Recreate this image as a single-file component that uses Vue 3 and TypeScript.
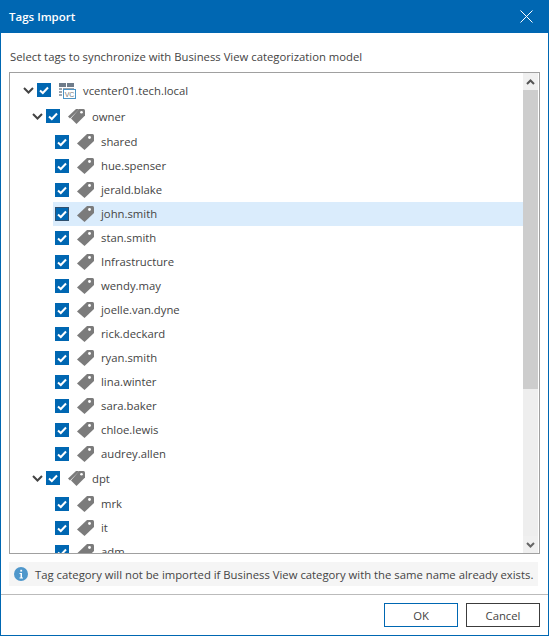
<script setup lang="ts">
interface Row { label: string; selected?: boolean }
const owners = ['shared','hue.spenser','jerald.blake','john.smith','stan.smith','Infrastructure','wendy.may','joelle.van.dyne','rick.deckard','ryan.smith','lina.winter','sara.baker','chloe.lewis','audrey.allen']
const rows: Row[] = owners.map(label => ({ label, selected: label === 'john.smith' }))
const dpt: Row[] = ['mrk','it','adm'].map(label => ({ label }))
const checkPath = 'M3 7.500l2.800 2.500L11 4.500'
const chevPath = 'M1 1l4.500 4.500L10 1'
const leafTag = 'M10 0H15.500Q17 0 17 1.500V7L7.500 16L0 9.500Z'
const catFront = 'M11 1H15.500Q17 1 17 2.500V7.500L8.500 16L3 10.500Z'
const catBack = 'M8 1L0 8.500L2 10.500L9.500 3L11 1Z'
</script>

<template>
  <div class="win">
    <header class="title">
      <span>Tags Import</span>
      <svg class="close" width="13" height="13" viewBox="0 0 13 13"><path d="M.5.5l12 12M12.500.5l-12 12" stroke="#fff" fill="none"/></svg>
    </header>
    <main class="body">
      <p class="lead">Select tags to synchronize with Business View categorization model</p>
      <div class="box">
        <div class="tree">
          <div class="row root">
            <svg class="chev" width="11" height="7" viewBox="0 0 11 7"><path :d="chevPath" fill="none" stroke="#444" stroke-width="2"/></svg>
            <span class="check"><svg width="14" height="14" viewBox="0 0 14 14"><path :d="checkPath" fill="none" stroke="#fff" stroke-width="2"/></svg></span>
            <svg class="vc" width="17" height="16" viewBox="0 0 17 16">
              <rect x="0" y="0" width="7" height="4" fill="#6f7c8a"/><rect x="8" y="0" width="7" height="4" fill="#6f7c8a"/>
              <rect x="0" y="5" width="3" height="2" fill="#9aa3ad"/><rect x="0" y="8" width="3" height="2" fill="#9aa3ad"/><rect x="0" y="11" width="3" height="2" fill="#9aa3ad"/>
              <rect x="4" y="5" width="11" height="2" fill="#9aa3ad"/>
              <rect x="4.500" y="6.500" width="12" height="9" fill="#fff" stroke="#4b93c4"/>
              <text x="10.500" y="13.500" text-anchor="middle" class="vc-text">VC</text>
            </svg>
            <span class="label top">vcenter01.tech.local</span>
          </div>
          <div class="row cat">
            <svg class="chev" width="11" height="7" viewBox="0 0 11 7"><path :d="chevPath" fill="none" stroke="#444" stroke-width="2"/></svg>
            <span class="check"><svg width="14" height="14" viewBox="0 0 14 14"><path :d="checkPath" fill="none" stroke="#fff" stroke-width="2"/></svg></span>
            <svg class="tag" width="17" height="16" viewBox="0 0 17 16"><path :d="catBack" fill="#7b7b7b"/><path :d="catFront" fill="#7b7b7b"/><circle cx="13.500" cy="4.300" r="1.300" fill="#fff"/></svg>
            <span class="label top">owner</span>
          </div>
          <div v-for="r in rows" :key="r.label" class="row leaf" :class="{ selected: r.selected }">
            <span class="check" :class="{ dark: r.selected }"><svg width="14" height="14" viewBox="0 0 14 14"><path :d="checkPath" fill="none" stroke="#fff" stroke-width="2"/></svg></span>
            <svg class="tag" width="17" height="16" viewBox="0 0 17 16"><path :d="leafTag" fill="#7b7b7b"/><circle cx="12.500" cy="3.500" r="1.400" fill="#fff"/></svg>
            <span class="label">{{ r.label }}</span>
          </div>
          <div class="row cat">
            <svg class="chev" width="11" height="7" viewBox="0 0 11 7"><path :d="chevPath" fill="none" stroke="#444" stroke-width="2"/></svg>
            <span class="check"><svg width="14" height="14" viewBox="0 0 14 14"><path :d="checkPath" fill="none" stroke="#fff" stroke-width="2"/></svg></span>
            <svg class="tag" width="17" height="16" viewBox="0 0 17 16"><path :d="catBack" fill="#7b7b7b"/><path :d="catFront" fill="#7b7b7b"/><circle cx="13.500" cy="4.300" r="1.300" fill="#fff"/></svg>
            <span class="label top">dpt</span>
          </div>
          <div v-for="r in dpt" :key="r.label" class="row leaf">
            <span class="check"><svg width="14" height="14" viewBox="0 0 14 14"><path :d="checkPath" fill="none" stroke="#fff" stroke-width="2"/></svg></span>
            <svg class="tag" width="17" height="16" viewBox="0 0 17 16"><path :d="leafTag" fill="#7b7b7b"/><circle cx="12.500" cy="3.500" r="1.400" fill="#fff"/></svg>
            <span class="label">{{ r.label }}</span>
          </div>
        </div>
        <div class="scroll">
          <div class="arrow"><svg width="9" height="6" viewBox="0 0 9 6"><path d="M1 5l3.500-3.500L8 5" fill="none" stroke="#555" stroke-width="2"/></svg></div>
          <div class="thumb"></div>
          <div class="track"></div>
          <div class="arrow"><svg width="9" height="6" viewBox="0 0 9 6"><path d="M1 1l3.500 3.500L8 1" fill="none" stroke="#666" stroke-width="2"/></svg></div>
        </div>
      </div>
      <div class="info">
        <svg class="info-icon" width="14" height="14" viewBox="0 0 14 14"><circle cx="7" cy="7" r="7" fill="#4f97cb"/><path d="M5.500 6H8V10.500H9V11.500H5.500V10.500H6.500V7H5.500Z" fill="#fff"/><rect x="6.300" y="2.800" width="1.800" height="1.800" fill="#fff"/></svg>
        <span>Tag category will not be imported if Business View category with the same name already exists.</span>
      </div>
    </main>
    <footer class="foot">
      <button class="btn ok">OK</button>
      <button class="btn">Cancel</button>
    </footer>
  </div>
</template>

<style scoped>
.win { width: 549px; height: 636px; box-sizing: border-box; border: 1px solid #0067b2; border-top: 0; display: flex; flex-direction: column; background: #fff; font-family: "Open Sans", "Noto Sans", sans-serif; font-size: 11.3px; color: #444; overflow: hidden; }
.title { height: 33px; margin: 0 -1px; padding: 0 10px 0 9px; background: #0067b2; color: #fff; font-weight: 600; font-size: 11.5px; display: flex; align-items: center; justify-content: space-between; flex: none; }
.close { margin-right: 6px; }
.body { flex: 1; min-height: 0; padding: 0 8px; display: flex; flex-direction: column; }
.lead { margin: 16px 0 7px 1px; height: 16px; line-height: 16px; }
.box { height: 482px; box-sizing: border-box; border: 1px solid #a0a0a0; display: flex; overflow: hidden; width: 531px; flex: none; }
.tree { flex: 1; min-width: 0; padding-top: 5px; }
.row { height: 24px; display: flex; align-items: center; flex: none; }
.root { padding-left: 13px; margin-bottom: 2px; }
.cat { padding-left: 22px; margin-bottom: 2px; }
.leaf { padding-left: 45px; }
.selected { background: #daecfc; margin-left: 43px; padding-left: 2px; }
.chev { flex: none; margin-right: 3px; }
.check { width: 14px; height: 14px; background: #0067b2; display: flex; flex: none; }
.check.dark { outline: 1px solid #30506e; outline-offset: -1px; }
.check svg { display: block; }
.tag, .vc { margin-left: 8px; flex: none; }
.vc { margin-top: 2px; }
.vc-text { font-size: 7px; font-family: "Liberation Sans", sans-serif; fill: #777; }
.label { margin-left: 7px; white-space: nowrap; padding-bottom: 2px; }
.label.top { padding-bottom: 0; }
.scroll { width: 15px; margin-right: 1px; flex: none; display: flex; flex-direction: column; background: #eeeeee; }
.arrow { height: 17px; display: flex; align-items: center; justify-content: center; flex: none; background: #f0f0f0; }
.thumb { height: 299px; background: #cdcdcd; flex: none; }
.track { flex: 1; }
.info { margin-top: 8px; height: 24px; width: 529px; background: #f5f5f5; display: flex; align-items: center; gap: 7px; padding-left: 5px; box-sizing: border-box; white-space: nowrap; flex: none; }
.info-icon { flex: none; }
.foot { height: 41px; border-top: 1px solid #bbb; display: flex; justify-content: flex-end; gap: 8px; padding: 8px 8px 0 0; box-sizing: border-box; flex: none; }
.btn { width: 74px; height: 24px; box-sizing: border-box; background: #fff; border: 1px solid #3c3c3c; font: inherit; color: #444; padding: 0; }
.ok { border-color: #0067b2; }
</style>
